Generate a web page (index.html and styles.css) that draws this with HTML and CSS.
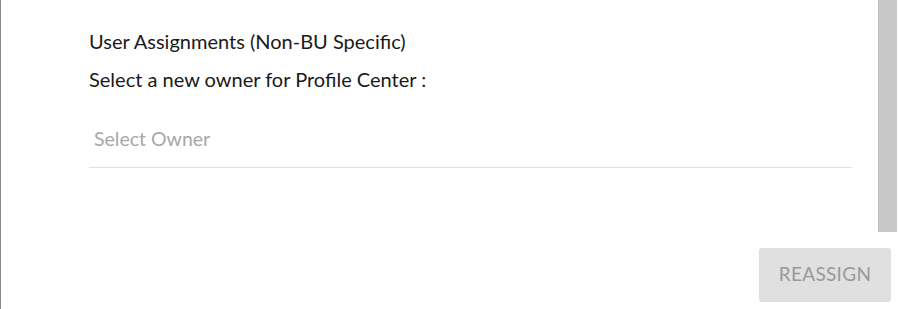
FILE: index.html
```html
<!DOCTYPE html>
<html>
<head>
<meta charset="utf-8">
<link rel="stylesheet" href="styles.css">
</head>
<body>
<div class="frame">
  <div class="content">
    <div class="panel">
      <div class="title">User Assignments (Non-BU Specific)</div>
      <div class="label">Select a new owner for Profile Center :</div>
      <div class="select">Select Owner</div>
    </div>
    <div class="scrollbar"><div class="thumb"></div></div>
  </div>
  <div class="footer">
    <button class="btn">REASSIGN</button>
  </div>
</div>
</body>
</html>
```
FILE: styles.css
```css
html, body {
  margin: 0;
  padding: 0;
  background: #fff;
}
body {
  font-family: Lato, "Open Sans", sans-serif;
  width: 898px;
  height: 309px;
  overflow: hidden;
}
.frame {
  height: 309px;
  border-left: 1px solid #8a8a8a;
  box-sizing: border-box;
  display: flex;
  flex-direction: column;
}
.content {
  display: flex;
  height: 232px;
}
.panel {
  flex: 1;
  padding: 27px 26px 0 88px;
}
.title {
  font-size: 20px;
  color: #1a1a1a;
  line-height: 28px;
}
.label {
  font-size: 20px;
  color: #1a1a1a;
  line-height: 28px;
  margin-top: 10px;
}
.select {
  margin-top: 32px;
  font-size: 19.5px;
  color: #a8a8a8;
  padding: 0 0 14px 5px;
  border-bottom: 1px solid #e0e0e0;
  line-height: 28px;
}
.scrollbar {
  width: 19px;
  margin-right: 1px;
  height: 232px;
}
.thumb {
  height: 100%;
  background: #c8c8c8;
  border-left: 1px solid #bdbdbd;
  box-sizing: border-box;
}
.footer {
  display: flex;
  justify-content: flex-end;
  padding: 16px 7px 0 0;
}
.btn {
  width: 132px;
  height: 54px;
  border: none;
  border-radius: 3px;
  background: #e0e0e0;
  color: #999;
  font-family: Lato, "Open Sans", sans-serif;
  font-size: 19px;
  letter-spacing: 0.3px;
  padding: 0 0 3px 0;
}
```
